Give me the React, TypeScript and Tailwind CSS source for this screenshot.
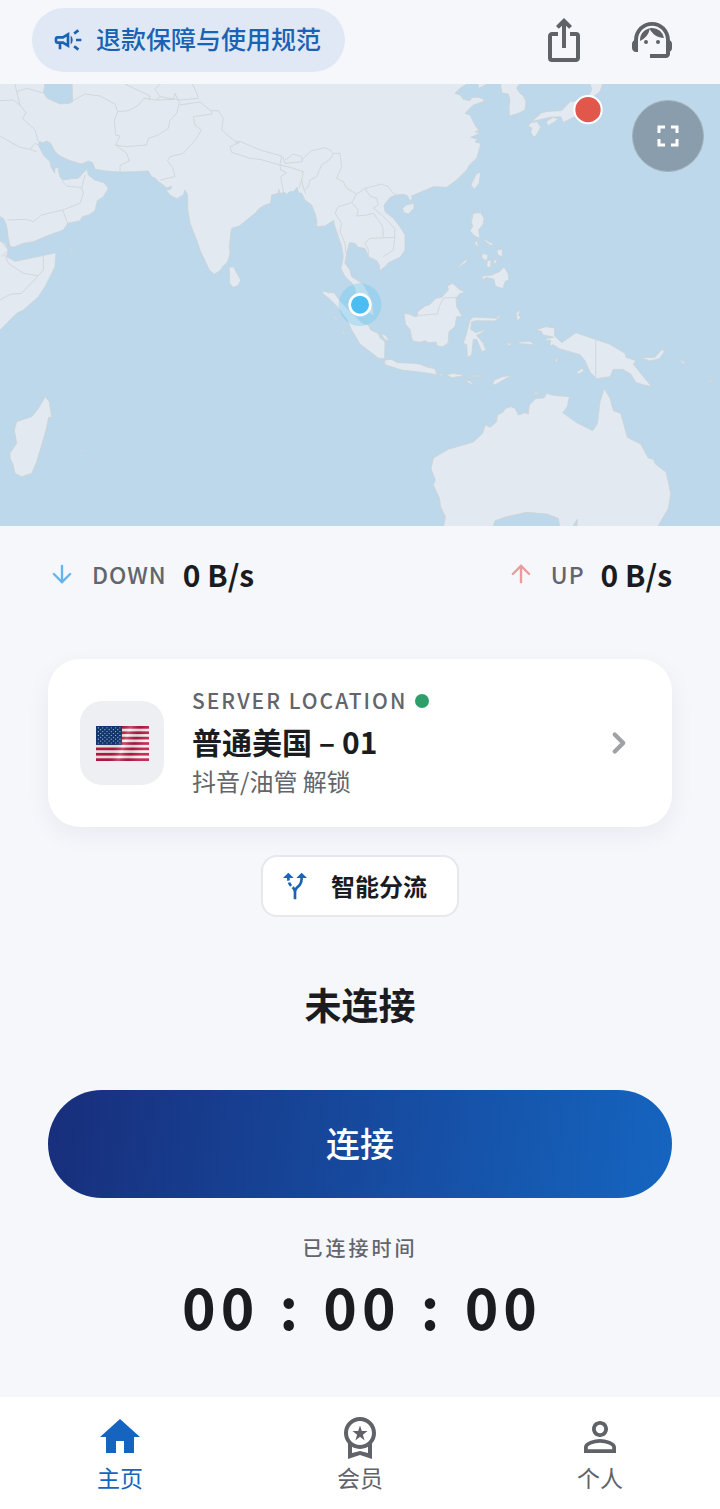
import React from "react";
import {
  MdAltRoute,
  MdFullscreen,
  MdHome,
  MdIosShare,
  MdOutlineCampaign,
  MdOutlineWorkspacePremium,
  MdPersonOutline,
  MdSupportAgent,
} from "react-icons/md";
import { ArrowDown, ArrowUp, ChevronRight } from "lucide-react";

const asia =
  "M-9 0V405L10 415 18 432 22 450 24 470 30 498 40 502 70 490 100 485 140 468 190 450 203 430 240 422 247 410 268 404 285 392 292 362 310 350 325 325 312 308 285 300 265 285 262 268 250 278 235 295 215 296 188 300 180 290 176 276 175 262 165 264 164 280 153 260 150 245 130 225 115 195 118 185 130 188 140 183 152 190 165 215 180 228 210 242 245 252 265 243 278 248 285 268 320 273 360 276 400 275 445 273 455 290 466 294 475 305 490 315 500 324 515 318 512 328 498 330 510 345 530 356 550 345 555 330 563 345 563 385 570 430 582 460 590 480 600 510 614 540 628 570 643 583 660 572 668 560 683 545 690 520 688 500 693 455 695 445 718 438 730 428 765 400 778 385 795 375 812 370 815 345 835 340 836 328 842 342 850 335 860 342 872 334 880 335 892 322 895 338 905 340 915 360 935 375 945 400 950 420 950 440 975 438 995 425 1000 420 1005 440 1015 470 1025 500 1030 530 1023 565 1035 590 1055 608 1065 625 1070 655 1088 690 1122 707 1118 670 1105 640 1092 615 1075 603 1055 590 1050 570 1035 550 1040 520 1048 488 1065 490 1075 502 1095 505 1105 530 1130 542 1138 555 1140 572 1160 555 1165 548 1200 532 1215 510 1215 465 1200 440 1180 415 1155 395 1152 375 1170 352 1190 345 1212 343 1222 347 1230 362 1237 357 1234 348 1265 335 1300 320 1340 322 1370 300 1400 270 1408 255 1430 235 1440 200 1442 190 1425 186 1432 178 1412 172 1440 160 1425 155 1437 152 1425 135 1410 105 1395 100 1420 75 1450 65 1452 58 1435 52 1416 52 1410 62 1390 58 1380 45 1365 40 1380 25 1400 12 1410 0Z";

const islands = [
  "M1500 0L1505 38 1525 42 1530 60 1527 82 1528 108 1555 100 1575 90 1578 65 1570 48 1560 40 1550 25 1565 0Z",
  "M1430 0L1437 25 1465 10 1470 0Z",
  "M1595 125L1625 98 1645 94 1685 92 1710 65 1740 62 1765 48 1775 30 1768 0 1812 0 1800 35 1780 50 1765 75 1745 100 1700 122 1690 127 1682 110 1650 112 1615 120Z",
  "M1592 128L1610 125 1622 140 1618 150 1605 170 1598 168 1592 155 1596 145 1585 138Z",
  "M1638 125L1660 112 1675 118 1645 137Z",
  "M1430 280L1442 278 1437 310 1423 328 1413 315Z",
  "M1208 385L1218 375 1242 370 1242 385 1225 402 1212 398Z",
  "M688 562L700 560 712 582 722 600 715 616 700 622 689 610Z",
  "M1420 400L1442 398 1452 415 1450 432 1436 450 1440 475 1423 468 1410 452 1418 440 1414 425Z",
  "M1423 488L1432 482 1436 505Z",
  "M1448 475L1480 492 1474 497 1458 486Z",
  "M1490 510L1508 508 1506 530 1494 525Z",
  "M1446 520L1464 525 1460 542 1446 535Z",
  "M1462 542L1473 540 1472 562 1460 560Z",
  "M1480 542L1492 538 1485 555Z",
  "M1446 600L1448 588 1476 585 1500 574 1512 560 1525 582 1526 600 1516 604 1508 626 1486 618 1482 598 1460 592Z",
  "M1365 570L1402 534 1399 546Z",
  "M-5 480L15 490 25 510 20 530 45 544 90 535 168 518 165 560 135 620 115 650 70 690 50 700 0 750-10 755Z",
];

const southSeas = [
  "M66 62L85 68 102 68 122 95 155 128 185 158 205 165 212 180 235 190 240 203 255 215 254 265 236 265 180 222 155 180 142 150 112 110 90 88 70 72Z",
  "M242 192L256 195 267 211 257 211Z",
  "M98 135L112 145 108 148Z",
  "M126 180L134 190 130 193Z",
  "M254 270L275 268 292 278 345 280 362 283 378 290 406 297 410 314 375 308 305 300 255 284Z",
  "M385 288L400 286 392 291Z",
  "M412 310L428 313 425 318Z",
  "M440 315L458 310 488 315 490 318 455 323Z",
  "M510 315L548 318 518 320Z",
  "M494 330L510 333 522 345 508 340Z",
  "M577 345L583 330 608 320 635 316 610 330 588 343Z",
  "M312 130L330 133 345 140 354 135 352 126 375 108 388 105 408 85 425 82 445 60 442 48 458 40 478 58 495 66 478 72 468 85 470 110 487 140 470 140 465 170 447 185 444 220 428 230 412 228 408 216 385 218 375 212 358 217 337 212 330 178 316 162Z",
  "M510 150L520 141 590 145 598 133 600 140 585 153 528 152 515 155 512 178 528 188 560 176 542 190 530 196 550 220 558 242 545 244 530 208 520 208 515 255 502 262 500 224 490 220 498 195Z",
  "M648 130L665 118 654 136 664 140 652 154Z",
  "M622 218L638 222 625 227Z",
  "M655 216L690 214 704 224 660 221Z",
  "M706 180L738 170 764 174 764 198 785 218 828 188 885 208 928 222 975 250 978 262 1008 272 1000 282 1030 320 1055 350 1030 344 1008 338 992 312 968 298 940 298 930 320 890 326 870 306 855 272 840 254 778 236 760 224 750 228 752 210 740 212 738 206 762 202 728 194 724 184Z",
  "M830 306L846 295 852 303 836 312Z",
  "M766 270L774 262 770 280Z",
  "M1022 263L1065 262 1086 238 1093 245 1078 266 1050 273Z",
  "M1135 264L1155 278 1150 282Z",
  "M1225 330L1240 334 1228 335Z",
  "M700 368L718 367 708 373Z",
  "M645 415L655 435 675 428 685 432 688 405 708 385 732 384 740 370 760 376 808 380 802 410 788 428 830 458 878 482 892 462 900 395 913 356 930 385 940 422 962 430 976 480 982 502 1022 522 1045 564 1060 568 1066 582 1098 606 1106 640 1112 672 1105 715 1070 775 430 775 436 740 422 710 418 684 400 645 406 630 393 597 400 564 445 538 520 516 548 490 556 464 570 472 590 455 592 436 610 426 615 416 632 410Z",
];

const borders = [
  "M0 62L40 60 60 75 78 98 68 115 105 150 115 185",
  "M45 12L50 35 80 25 115 35 128 38",
  "M50 35L60 75M0 168L60 202 90 208 105 190 115 195M90 208L110 216",
  "M22 420L80 418 100 425 125 405 188 390 203 430M188 390L240 370 250 340 245 323 200 318 185 302M245 323L255 285",
  "M218 62L255 42 300 48 345 72 353 95 343 120 347 165 360 168 347 195 380 220 388 243 360 256 360 275",
  "M353 95L385 92 412 78 432 55 468 60 520 58 525 40 538 68 530 100 510 120 505 145 475 165 445 175 440 195 375 200 347 195",
  "M375 12L450 48 448 58M480 12L465 28 480 50 470 60M480 50L540 60 595 55 590 38 577 12",
  "M538 75L600 66 632 92 655 92 670 115 665 150 700 180 718 188 690 200 695 217 750 235 780 238 840 255 845 228 780 210 720 184 705 190",
  "M632 92L636 102 580 110 585 135 604 150 590 175 550 220 510 230 502 242 518 262 525 290 480 300",
  "M840 255L870 262 910 275 905 300 897 325M840 255L842 270 860 278 842 290 850 335M855 240L880 222 905 230 908 245 855 250 848 230M905 240L935 212 975 203 990 210 1000 220",
  "M905 300L912 330 918 342M912 330L925 320 930 300 950 290 965 255 990 238 1000 220",
  "M1000 220L1020 220 1025 260 1010 295 1030 305 1040 325 1070 342 1055 368 1015 380 1005 400 1025 430 1020 455 1035 490 1038 520",
  "M1070 342L1095 325 1110 348 1130 355 1135 375 1120 385 1140 400 1165 425 1184 445 1184 475 1180 510 1150 530",
  "M1095 325L1145 312 1165 320 1180 340 1190 345M1055 368L1075 390 1070 408 1100 405 1120 400 1135 420 1148 440 1150 470",
  "M1184 472L1110 475 1095 488 1105 510 1105 530",
  "M15 525L25 550 70 580 115 587 130 570 130 528M115 587L65 640 30 643 0 660M0 480L25 510 5 530",
];

function WorldMap() {
  return (
    <svg
      className="block h-full w-full"
      viewBox="0 252 2160 1326"
      preserveAspectRatio="xMidYMid slice"
      role="img"
      aria-label="地图"
      strokeLinejoin="round"
    >
      <g transform="translate(0 240)" fill="#e2e9f0" stroke="#cdd3d6" strokeWidth="2.4">
        <path d={asia} />
        {islands.map((d) => (
          <path key={d} d={d} />
        ))}
        <path
          fill="#bcd8ea"
          d="M137 0L130 38 142 55 180 72 208 70 218 65 216 0Z"
        />
        {borders.map((d) => (
          <path key={d} d={d} fill="none" />
        ))}
        <path d="M208 507l14 1-6 4z" />
      </g>
      <g transform="translate(900 810)" fill="#e2e9f0" stroke="#cdd3d6" strokeWidth="2.4">
        {southSeas.map((d) => (
          <path key={d} d={d} />
        ))}
        <path
          fill="none"
          d="M887 208V322M345 140L370 135 412 132 418 110 430 84 478 82M1170 282l15 12M1200 305l15 12M575 190l20 4M1100 235v6"
        />
        <path
          fill="#bcd8ea"
          d="M578 775L585 752 620 740 680 727 740 732 775 745 780 775ZM814 775L832 748 830 775Z"
        />
      </g>
      <g transform="translate(0 990)" fill="#e2e9f0" stroke="#cdd3d6" strokeWidth="2.4">
        <path d="M136 200L148 215 155 262 146 262 138 300 125 345 110 395 95 430 65 440 45 430 38 400 30 385 30 370 50 340 43 300 50 275 95 260 112 240Z" />
        <path d="M245 359h5v5h-5zM284 345h3v2h-3z" />
      </g>
      <circle cx="1080" cy="914" r="64" fill="#4fc3f7" fillOpacity=".28" />
      <circle cx="1080" cy="914" r="31" fill="#4bbdf1" stroke="#fff" strokeWidth="8" />
      <circle cx="1764" cy="329" r="41" fill="#e2574c" stroke="#fff" strokeWidth="6" />
    </svg>
  );
}

function UsFlag() {
  return (
    <svg className="h-[35px] w-[53px]" viewBox="0 0 53 35" role="img" aria-label="US">
      <defs>
        <linearGradient id="fold" x1="0" y1="0" x2="1" y2="0.25">
          <stop offset="0" stopColor="#000" stopOpacity=".05" />
          <stop offset=".45" stopColor="#000" stopOpacity=".1" />
          <stop offset=".62" stopColor="#fff" stopOpacity=".22" />
          <stop offset=".8" stopColor="#000" stopOpacity=".12" />
          <stop offset="1" stopColor="#fff" stopOpacity=".1" />
        </linearGradient>
      </defs>
      <rect width="53" height="35" fill="#f7f1f4" />
      {[0, 1, 2, 3, 4, 5, 6].map((i) => (
        <rect key={i} y={(i * 70) / 13} width="53" height={35 / 13} fill="#bd1a45" />
      ))}
      <rect width="26" height="18.85" fill="#143a78" />
      {Array.from({ length: 9 }, (_, r) =>
        Array.from({ length: r % 2 ? 5 : 6 }, (_, c) => (
          <circle
            key={`${r}-${c}`}
            cx={(r % 2 ? 4.6 : 2.4) + c * 4.3}
            cy={1.8 + r * 1.9}
            r=".6"
            fill="#b9cbe6"
          />
        )),
      )}
      <rect width="53" height="35" fill="url(#fold)" />
    </svg>
  );
}

function Rate({
  icon,
  label,
  value,
}: {
  icon: React.ReactNode;
  label: string;
  value: string;
}) {
  return (
    <div className="flex items-center">
      {icon}
      <span className="ml-4 text-[23px] leading-9 font-medium tracking-[1px] text-[#62656b]">
        {label}
      </span>
      <span className="ml-4 text-[30px] leading-9 font-bold">{value}</span>
    </div>
  );
}

const tabs = [
  { label: "主页", Icon: MdHome, active: true },
  { label: "会员", Icon: MdOutlineWorkspacePremium, active: false },
  { label: "个人", Icon: MdPersonOutline, active: false },
];

export default function App() {
  return (
    <div className="flex min-h-screen flex-col bg-[#f5f7fb] font-['Noto_Sans_CJK_SC',sans-serif] text-[#1a1c1f]">
      <header className="flex h-[84px] items-center justify-between pr-11 pb-1 pl-8">
        <button className="flex h-16 items-center gap-3 rounded-full bg-[#e1e8f5] pr-6 pl-5 text-[25px] leading-8 font-medium text-[#1a62b4]">
          <MdOutlineCampaign size={32} />
          <span className="pb-1">退款保障与使用规范</span>
        </button>
        <div className="flex gap-10 text-[#5f6368]">
          <button aria-label="分享">
            <MdIosShare size={48} />
          </button>
          <button aria-label="客服">
            <MdSupportAgent size={48} />
          </button>
        </div>
      </header>

      <main className="flex flex-1 flex-col">
        <section className="relative h-[442px] bg-[#bcd8ea]">
          <WorldMap />
          <button
            aria-label="全屏"
            className="absolute top-4 right-4 flex size-[72px] items-center justify-center rounded-full border border-[#a3b2bd] bg-[#8a9dac] text-white"
          >
            <MdFullscreen size={36} />
          </button>
        </section>

        <section className="flex h-24 items-center justify-between px-12">
          <Rate
            icon={<ArrowDown size={28} strokeWidth={2} color="#64b5ec" />}
            label="DOWN"
            value="0 B/s"
          />
          <Rate
            icon={<ArrowUp size={28} strokeWidth={2} color="#ec9a9c" />}
            label="UP"
            value="0 B/s"
          />
        </section>

        <section className="flex flex-col items-center px-12 pt-[37px]">
          <button className="flex h-[168px] w-full items-center rounded-[32px] bg-white pr-9 pl-8 text-left shadow-[0_8px_24px_rgba(30,40,70,0.06)]">
            <span className="flex size-[84px] items-center justify-center rounded-[22px] bg-[#eeeff3]">
              <UsFlag />
            </span>
            <span className="ml-7 flex flex-1 flex-col pb-1">
              <span className="flex h-9 items-center gap-2 text-[21px] font-medium tracking-[2px] text-[#62656b]">
                SERVER LOCATION
                <span className="size-[14px] rounded-full bg-[#2e9e6b]" />
              </span>
              <span className="text-[30px] leading-11 font-bold">普通美国 – 01</span>
              <span className="text-2xl leading-9 text-[#62656b]">抖音/油管 解锁</span>
            </span>
            <ChevronRight size={34} strokeWidth={3} color="#a0a2a5" />
          </button>

          <button className="mt-7 flex h-[62px] items-center gap-5 rounded-2xl border-2 border-[#e6e8ed] bg-white pr-[30px] pl-4 text-2xl font-bold">
            <MdAltRoute size={32} color="#1b63b5" />
            智能分流
          </button>

          <h1 className="mt-[60px] text-[37px] leading-[54px] font-bold">未连接</h1>

          <button className="mt-[59px] h-[108px] w-full rounded-full bg-linear-[100deg,#182e7b,#1565c0] pb-1 text-[34px] font-medium text-white">
            连接
          </button>

          <p className="mt-[34px] text-xl leading-8 font-medium tracking-[3px] text-[#62656b]">
            已连接时间
          </p>
          <div className="mt-1 flex h-[76px] items-center pl-1 text-[57px] font-bold tracking-[5px]">
            <span>00</span>
            <span className="w-16 text-center">:</span>
            <span>00</span>
            <span className="w-16 text-center">:</span>
            <span>00</span>
          </div>
        </section>
      </main>

      <nav className="grid h-28 grid-cols-3 bg-white">
        {tabs.map(({ label, Icon, active }) => (
          <a
            key={label}
            href="#"
            aria-current={active ? "page" : undefined}
            className={
              active
                ? "flex flex-col items-center pt-4 text-[23px] leading-8 text-[#1565c0]"
                : "flex flex-col items-center pt-4 text-[23px] leading-8 text-[#5f6368]"
            }
          >
            <Icon size={48} />
            <span>{label}</span>
          </a>
        ))}
      </nav>
    </div>
  );
}
